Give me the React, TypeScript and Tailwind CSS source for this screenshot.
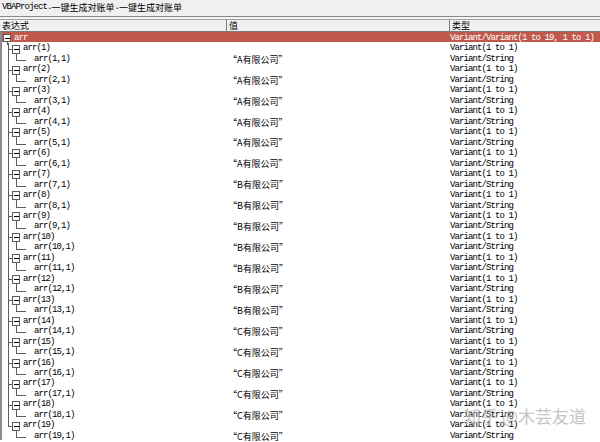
type Row = { kind: "parent" | "child"; i: number };

const rows: Row[] = [];
for (let i = 1; i <= 19; i++) {
  rows.push({ kind: "parent", i });
  rows.push({ kind: "child", i });
}

const company = (i: number) => (i <= 6 ? "A" : i <= 13 ? "B" : "C");

const mono = "font-['Liberation_Mono',monospace] text-[9px] tracking-[-0.9px]";
const cjk = "font-['Noto_Sans_CJK_SC',sans-serif] text-[9px]";

function TreeLines({ kind, last }: { kind: "root" | "parent" | "child"; last: boolean }) {
  const c = "#5c5c5c";
  return (
    <svg width="32" height="11" className="shrink-0 overflow-visible" shapeRendering="crispEdges">
      {kind === "root" && (
        <g>
          <rect x="1.5" y="1.5" width="7" height="7" fill="white" stroke={c} />
          <line x1="3" y1="5" x2="8" y2="5" stroke="#000" />
          <line x1="5.5" y1="9" x2="5.5" y2="12" stroke={c} />
        </g>
      )}
      {kind === "parent" && (
        <g>
          <line x1="6.5" y1="-1" x2="6.5" y2={last ? 5.5 : 12} stroke={c} />
          <line x1="6.5" y1="5.5" x2="11" y2="5.5" stroke={c} />
          <rect x="10.5" y="1.5" width="7" height="8" fill="white" stroke={c} />
          <line x1="12" y1="5.5" x2="17" y2="5.5" stroke="#000" />
          <line x1="14.5" y1="10" x2="14.5" y2="12" stroke={c} />
        </g>
      )}
      {kind === "child" && (
        <g>
          {!last && <line x1="6.5" y1="-1" x2="6.5" y2="12" stroke={c} />}
          <line x1="14.5" y1="-1" x2="14.5" y2="6.5" stroke={c} />
          <line x1="14.5" y1="6.5" x2="24" y2="6.5" stroke={c} />
        </g>
      )}
    </svg>
  );
}

export default function App() {
  return (
    <div className="relative h-[442px] w-[600px] overflow-hidden bg-white text-black">
      <div className="flex h-[17px] items-center border-b border-[#8a8a8a] bg-[#f0f0f0] pl-[2px]">
        <span className={mono}>VBAProject.</span>
        <span className={cjk}>一键生成对账单</span>
        <span className={mono}>.</span>
        <span className={cjk}>一键生成对账单</span>
      </div>
      <div className="h-[3px] border-b border-[#a0a0a0] bg-[#f4f4f4]" />
      <div className="grid h-[12px] grid-cols-[226px_223px_1fr] border-b border-[#7a7a7a] bg-[#f0f0f0] leading-[11px]">
        <div className={`${cjk} pl-[2px]`}>表达式</div>
        <div className={`${cjk} border-l border-[#7a7a7a] pl-[2px]`}>值</div>
        <div className={`${cjk} border-l border-[#7a7a7a] pl-[2px]`}>类型</div>
      </div>
      <div className="border-l-2 border-[#8c8c8c]">
        <div className="grid h-[10.47px] grid-cols-[224px_223px_1fr] items-center bg-[#c0594b] text-white">
          <div className="flex items-center">
            <TreeLines kind="root" last={false} />
            <span className={`${mono} -ml-[20px]`}>arr</span>
          </div>
          <div />
          <div className={`${mono} pl-[1px] whitespace-nowrap`}>Variant/Variant(1 to 19, 1 to 1)</div>
        </div>
        {rows.map((r) => {
          const last = r.i === 19;
          return (
            <div
              key={`${r.kind}-${r.i}`}
              className="grid h-[10.47px] grid-cols-[224px_223px_1fr] items-center"
            >
              <div className="flex items-center">
                <TreeLines kind={r.kind} last={last} />
                {r.kind === "parent" ? (
                  <span className={`${mono} -ml-[11px]`}>arr({r.i})</span>
                ) : (
                  <span className={mono}>arr({r.i},1)</span>
                )}
              </div>
              <div className="flex h-[10.47px] items-center overflow-visible pl-[2px]">
                {r.kind === "child" && (
                  <span className={`${cjk} block leading-[10px]`}>“{company(r.i)}有限公司”</span>
                )}
              </div>
              <div className={`${mono} pl-[1px] whitespace-nowrap`}>
                {r.kind === "parent" ? "Variant(1 to 1)" : "Variant/String"}
              </div>
            </div>
          );
        })}
      </div>
      <div className="absolute bottom-[14px] right-[14px] font-['Noto_Sans_CJK_SC',sans-serif] text-[17px] text-[#b8b8b8] opacity-80">
        知乎 @木芸友道
      </div>
    </div>
  );
}
